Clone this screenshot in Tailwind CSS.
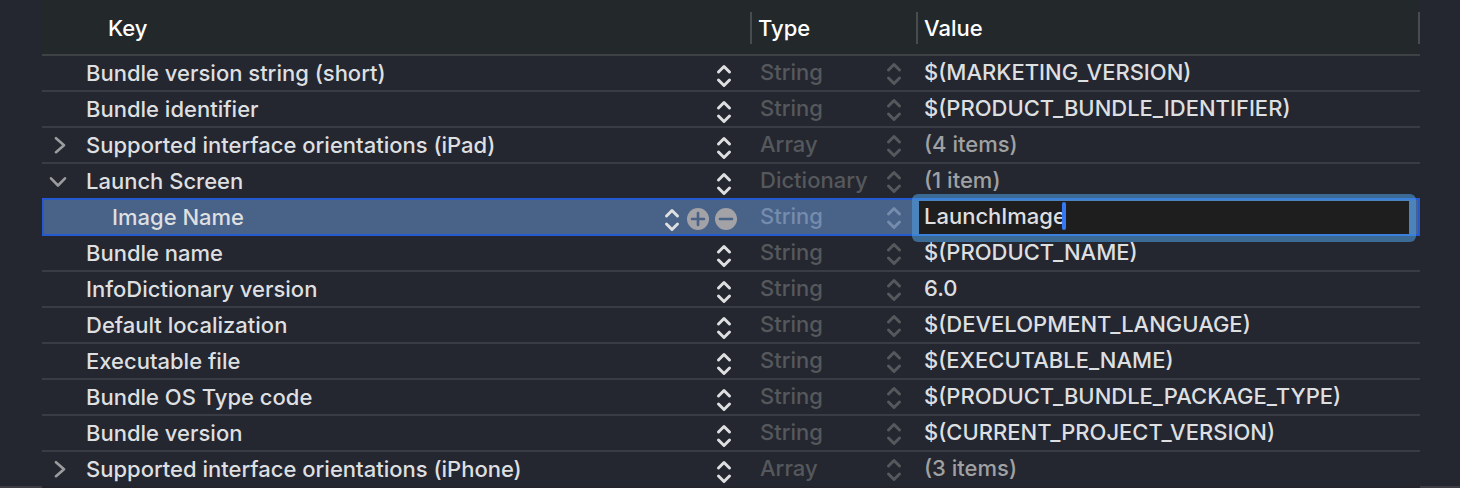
<!DOCTYPE html>
<html lang="en">
<head>
  <meta charset="UTF-8">
  <meta name="viewport" content="width=device-width, initial-scale=1.0">
  <title>Info.plist</title>
  <script src="https://cdn.jsdelivr.net/npm/@tailwindcss/browser@4"></script>
</head>
<body class="bg-[#24272f] font-[Inter,sans-serif] text-[22px] leading-7 font-[450] text-[#dedfe0]">
  <!-- Icons -->
  <svg class="hidden">
    <symbol id="stepper" viewBox="0 0 16 24">
      <path d="M2.500 8 8 2.500l5.500 5.500M2.500 16 8 21.500l5.500-5.500" fill="none" stroke="currentColor" stroke-width="3" stroke-linecap="round" stroke-linejoin="round"/>
    </symbol>
    <symbol id="closed" viewBox="0 0 18 18">
      <path d="M5 2.200 13 9.200l-8 7" fill="none" stroke="currentColor" stroke-width="2.600" stroke-linecap="round" stroke-linejoin="round"/>
    </symbol>
    <symbol id="open" viewBox="0 0 18 18">
      <path d="M2 6.300 9 13.500l7-7.200" fill="none" stroke="currentColor" stroke-width="2.600" stroke-linecap="round" stroke-linejoin="round"/>
    </symbol>
    <symbol id="plus" viewBox="0 0 22 22">
      <circle cx="11" cy="11" r="11" fill="#a3a2a6"/>
      <path d="M11 5v12M5 11h12" stroke="#486288" stroke-width="2.600" stroke-linecap="round"/>
    </symbol>
    <symbol id="minus" viewBox="0 0 22 22">
      <circle cx="11" cy="11" r="11" fill="#a3a2a6"/>
      <path d="M5 11h12" stroke="#486288" stroke-width="2.600" stroke-linecap="round"/>
    </symbol>
  </svg>

  <div class="flex">
    <div class="w-[42px] shrink-0 border-b-2 border-[#3e3c43]"></div>
    <table class="min-w-0 flex-1 table-fixed border-separate border-spacing-0 text-left">
      <colgroup>
        <col class="w-[710px]">
        <col class="w-[166px]">
        <col>
      </colgroup>
      <thead class="bg-[#23282b] text-white">
        <tr class="h-14">
          <th class="border-b-2 border-[#3e4245] p-0 pt-[2px] font-medium">
            <div class="flex h-8 items-center border-r-2 border-[#484c4f] pl-[66px]">Key</div>
          </th>
          <th class="border-b-2 border-[#3e4245] p-0 pt-[2px] font-medium">
            <div class="flex h-8 items-center border-r-2 border-[#484c4f] pl-[6px]">Type</div>
          </th>
          <th class="border-b-2 border-[#3e4245] p-0 pt-[2px] font-medium">
            <div class="flex h-8 items-center border-r-2 border-[#484c4f] pl-[6px]">Value</div>
          </th>
        </tr>
      </thead>
      <tbody id="rows"></tbody>
    </table>
    <div class="w-10 shrink-0 border-b-2 border-[#3e3c43]"></div>
  </div>

  <script>
    const rows = [
      { key: 'Bundle version string (short)', type: 'String', value: '$(MARKETING_VERSION)' },
      { key: 'Bundle identifier', type: 'String', value: '$(PRODUCT_BUNDLE_IDENTIFIER)' },
      { key: 'Supported interface orientations (iPad)', type: 'Array', value: '(4 items)', arrow: 'closed' },
      { key: 'Launch Screen', type: 'Dictionary', value: '(1 item)', arrow: 'open' },
      { key: 'Image Name', type: 'String', value: 'LaunchImage', selected: true },
      { key: 'Bundle name', type: 'String', value: '$(PRODUCT_NAME)' },
      { key: 'InfoDictionary version', type: 'String', value: '6.0' },
      { key: 'Default localization', type: 'String', value: '$(DEVELOPMENT_LANGUAGE)' },
      { key: 'Executable file', type: 'String', value: '$(EXECUTABLE_NAME)' },
      { key: 'Bundle OS Type code', type: 'String', value: '$(PRODUCT_BUNDLE_PACKAGE_TYPE)' },
      { key: 'Bundle version', type: 'String', value: '$(CURRENT_PROJECT_VERSION)' },
      { key: 'Supported interface orientations (iPhone)', type: 'Array', value: '(3 items)', arrow: 'closed' },
    ];

    const stepper = (label) => `
      <button type="button" aria-label="${label}"><svg class="h-6 w-4"><use href="#stepper"/></svg></button>`;

    // The selected row also colours the line above it
    function lineColor(i) {
      if (i === rows.length - 1) return 'border-[#24242c]';
      if (rows[i].selected || rows[i + 1].selected) return 'border-[#2459cf]';
      return 'border-[#393c44]';
    }

    function keyCell(row) {
      const arrow = row.arrow
        ? `<button type="button" aria-label="Toggle ${row.key}" class="text-[#9b9c9e] ${row.arrow === 'closed' ? 'pl-[2px]' : ''}"><svg class="size-[18px]"><use href="#${row.arrow}"/></svg></button>`
        : '';
      const actions = row.selected
        ? `<button type="button" aria-label="Add row" class="-mt-[2px] ml-[7px]"><svg class="size-[22px]"><use href="#plus"/></svg></button>
           <button type="button" aria-label="Remove row" class="-mt-[2px] ml-[6px]"><svg class="size-[22px]"><use href="#minus"/></svg></button>`
        : '';
      return `
        <div class="flex h-[34px] items-center ${row.selected ? 'border-l-2 border-[#2459cf] pr-[15px] pl-[5px]' : 'pr-5 pl-[7px]'}">
          <span class="flex shrink-0 items-center ${row.selected ? 'w-[63px]' : 'w-[37px]'}">${arrow}</span>
          <span class="flex-1">${row.key}</span>
          <span class="flex items-center pt-[6px]">${stepper('Choose key')}${actions}</span>
        </div>`;
    }

    function valueCell(row) {
      if (!row.selected) {
        return `<div class="h-[34px] pt-[2px] pl-[6px] ${row.arrow ? 'text-[#a0a1a3]' : ''}">${row.value}</div>`;
      }
      return `
        <div class="relative h-[34px] border-r-2 border-[#2459cf]">
          <div class="absolute -top-[6px] right-[2px] -bottom-2 -left-[6px] rounded-md border-[7px] border-b-8 border-[#4f9fe5]/56 bg-[#1e1e1e] bg-clip-padding">
            <input type="text" aria-label="Value" value="${row.value}" class="block h-full w-full bg-transparent pb-[3px] pl-[5px] outline-none">
            <span class="absolute top-px left-[143px] h-7 w-1 rounded-sm bg-[#3478f6]"></span>
          </div>
        </div>`;
    }

    document.getElementById('rows').innerHTML = rows.map((row, i) => `
      <tr class="h-9 ${row.selected ? 'bg-[#486288]' : ''}">
        <td class="border-b-2 p-0 ${lineColor(i)}">${keyCell(row)}</td>
        <td class="border-b-2 p-0 ${lineColor(i)}">
          <div class="flex h-[34px] items-center justify-between pr-4 pb-[2px] pl-2 ${row.selected ? 'text-[#768cad]' : 'text-[#55585c]'}">
            <span>${row.type}</span>
            <span class="flex pt-1">${stepper('Choose type')}</span>
          </div>
        </td>
        <td class="border-b-2 p-0 ${lineColor(i)}">${valueCell(row)}</td>
      </tr>`).join('');
  </script>
</body>
</html>
